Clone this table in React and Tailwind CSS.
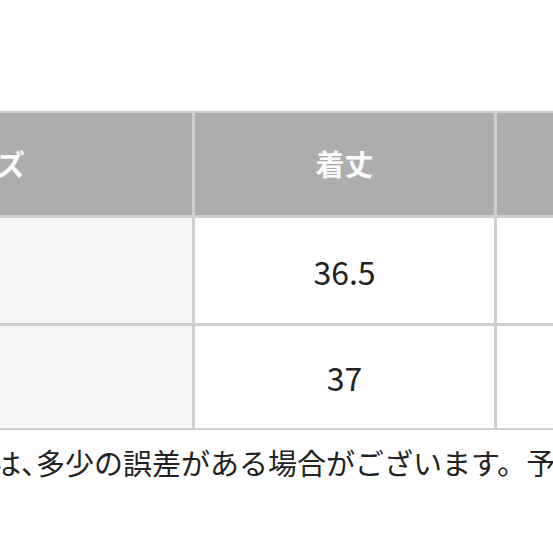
export default function App() {
  const font = { fontFamily: '"Noto Sans CJK JP", "Noto Sans", sans-serif' };
  return (
    <div className="w-[553px] h-[553px] overflow-hidden bg-white" style={font}>
      <div className="h-[111px]" />
      <div className="ml-[-228px] w-[1100px] grid grid-cols-[420px_299px_299px] grid-rows-[102px_105px_102px] gap-[3px] bg-[#cecece] py-[2px]">
        <div className="bg-[#adadad] flex items-center justify-center text-[#fafafa] font-bold text-[29px]">サイズ</div>
        <div className="bg-[#adadad] flex items-center justify-center text-[#fafafa] font-bold text-[29px]">着丈</div>
        <div className="bg-[#adadad] flex items-center justify-center text-[#fafafa] font-bold text-[29px]">身幅</div>

        <div className="bg-[#f6f6f6] flex items-center justify-center text-[#222] text-[32px]">S</div>
        <div className="bg-white flex items-center justify-center text-[#222] text-[32px]">36.5</div>
        <div className="bg-white flex items-center justify-center text-[#222] text-[32px]">45</div>

        <div className="bg-[#f6f6f6] flex items-center justify-center text-[#222] text-[32px]">M</div>
        <div className="bg-white flex items-center justify-center text-[#222] text-[32px]">37</div>
        <div className="bg-white flex items-center justify-center text-[#222] text-[32px]">47</div>
      </div>
      <p className="mt-[12px] ml-[-8px] text-[29px] leading-[40px] text-[#222] whitespace-nowrap">
        は<span className="tracking-[-14px]">、</span>多少の誤差がある場合がございます。予めご了承ください。
      </p>
    </div>
  );
}
